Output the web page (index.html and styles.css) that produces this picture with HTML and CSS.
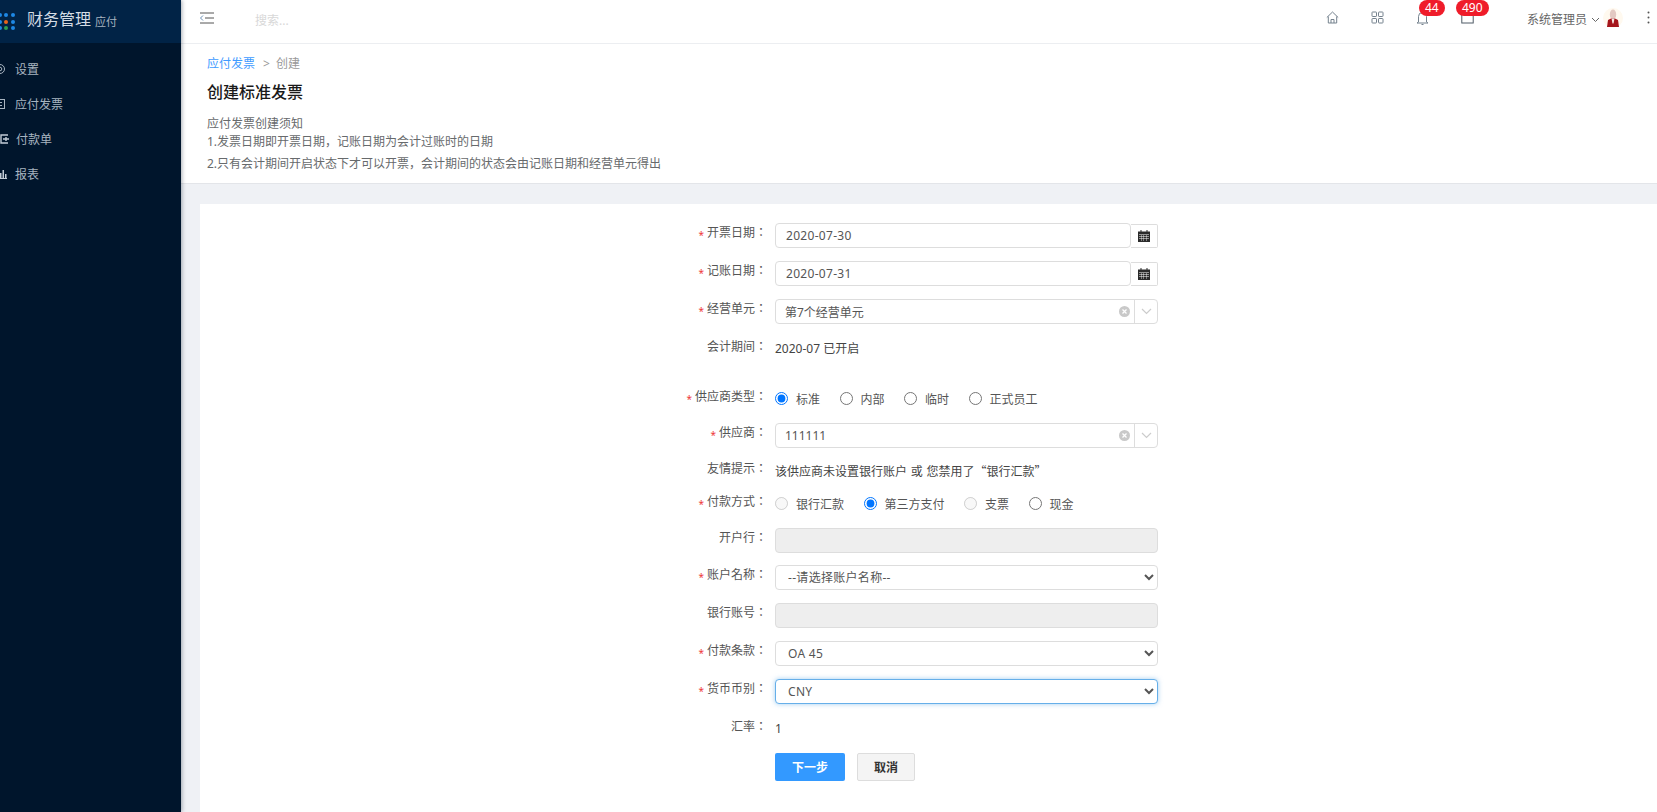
FILE: index.html
```html
<!DOCTYPE html>
<html lang="zh-CN">
<head>
    <meta charset="UTF-8">
    <meta name="viewport" content="width=device-width, initial-scale=1.0">
    <title>创建标准发票</title>
    <link rel="stylesheet" href="styles.css">
</head>
<body>
    <aside class="sidebar">
        <div class="brand">
            <svg class="brand-dots" width="18" height="20" viewBox="0 0 18 20">
                <g fill="#1e88e5">
                    <circle cx="0" cy="3" r="2"/><circle cx="6" cy="3" r="2"/><circle cx="13" cy="3" r="2"/>
                    <circle cx="0" cy="10" r="2"/><circle cx="13" cy="10" r="2"/>
                    <circle cx="0" cy="16" r="2"/><circle cx="13" cy="16" r="2"/>
                </g>
                <circle cx="6" cy="10" r="2" fill="#e8651a"/>
                <circle cx="6" cy="16" r="2" fill="#2e9e4f"/>
            </svg>
            <span class="brand-name">财务管理</span>
            <span class="brand-sub">应付</span>
        </div>
        <nav class="menu">
            <a class="menu-item">
                <svg class="menu-icon" width="12" height="12" viewBox="0 0 12 12" fill="none" stroke="#a8b4c0"><circle cx="6" cy="6" r="4.5"/><circle cx="6" cy="6" r="1.8"/></svg>
                <span>设置</span>
            </a>
            <a class="menu-item">
                <svg class="menu-icon" width="12" height="12" viewBox="0 0 12 12" fill="none" stroke="#a8b4c0"><rect x="1.5" y="1.5" width="9" height="9"/><path d="M4 4.5h4M4 7.5h4"/></svg>
                <span>应付发票</span>
            </a>
            <a class="menu-item menu-item-wide">
                <svg class="menu-icon" width="12" height="12" viewBox="0 0 12 12" fill="none" stroke="#c2ccd6" stroke-width="1.4"><path d="M10 2H3v8h7M5 6h6M8 4v4"/></svg>
                <span>付款单</span>
            </a>
            <a class="menu-item menu-item-bars">
                <svg class="menu-icon" width="12" height="12" viewBox="0 0 12 12" fill="#c2ccd6"><rect x="0" y="5" width="1.5" height="6"/><rect x="2.5" y="2" width="1.5" height="9"/><rect x="5" y="6" width="1.5" height="5"/><rect x="0" y="10" width="7" height="1"/></svg>
                <span>报表</span>
            </a>
        </nav>
    </aside>

    <div class="main">
        <header class="topbar">
            <svg class="toggle" width="16" height="12" viewBox="0 0 16 12" fill="none" stroke="#555">
                <path d="M1 1h14M6 6h9M1 11h14"/>
                <path d="M4 3.5 1.5 6 4 8.5" stroke="#6a8fb5"/>
            </svg>
            <span class="search">搜索...</span>
            <div class="top-icons">
                <span class="top-icon">
                    <svg width="13" height="13" viewBox="0 0 13 13" fill="none" stroke="#75828e"><path d="M.8 6.5 6.5 1l5.700 5.500M2.300 5.500V12h8.400V5.500M5 12V8.500h3V12"/></svg>
                </span>
                <span class="top-icon">
                    <svg width="13" height="13" viewBox="0 0 13 13" fill="none" stroke="#75828e"><rect x="1" y="1" width="4.500" height="4.500" rx=".6"/><rect x="7.500" y="1" width="4.500" height="4.500" rx=".6"/><rect x="1" y="7.500" width="4.500" height="4.500" rx=".6"/><rect x="7.500" y="7.500" width="4.500" height="4.500" rx=".6"/></svg>
                </span>
                <span class="top-icon">
                    <svg width="13" height="15" viewBox="0 0 13 15" fill="none" stroke="#75828e"><path d="M2.500 11V5.500a4 4 0 0 1 8 0V11l1.500 1H1zM5.500 13.500h2"/></svg>
                    <b class="badge">44</b>
                </span>
                <span class="top-icon">
                    <svg width="13" height="13" viewBox="0 0 13 13" fill="none" stroke="#4f5b66"><rect x=".8" y="1" width="11.400" height="11"/><path d="M4 3.500h5"/></svg>
                    <b class="badge">490</b>
                </span>
            </div>
            <span class="user-name">系统管理员</span>
            <svg class="user-caret" width="9" height="6" viewBox="0 0 9 6" fill="none" stroke="#666"><path d="M1 1l3.500 3.500L8 1"/></svg>
            <svg class="avatar" width="20" height="20" viewBox="0 0 20 20">
                <circle cx="10" cy="10" r="10" fill="#fff9ef"/>
                <ellipse cx="10" cy="6.500" rx="3.200" ry="5" fill="#e3c9c2"/>
                <path d="M4 19l1-7 3-1.500h4l3 1.500 1 7z" fill="#a5151b"/>
                <path d="M8.500 10.500h3l-1 5h-1z" fill="#f4e8e4"/>
            </svg>
            <svg class="more" width="3" height="13" viewBox="0 0 3 13" fill="#555"><circle cx="1.500" cy="1.500" r="1"/><circle cx="1.500" cy="6.500" r="1"/><circle cx="1.500" cy="11.500" r="1"/></svg>
        </header>

        <section class="page-head">
            <div class="crumbs"><a>应付发票</a><i>&gt;</i><span>创建</span></div>
            <h1>创建标准发票</h1>
            <p class="notice-title">应付发票创建须知</p>
            <p class="notice-one">1.发票日期即开票日期，记账日期为会计过账时的日期</p>
            <p class="notice-two">2.只有会计期间开启状态下才可以开票，会计期间的状态会由记账日期和经营单元得出</p>
        </section>

        <section class="card">
            <form class="invoice-form">
                <div class="form-row">
                    <label class="form-label required">开票日期：</label>
                    <div class="form-field date-group">
                        <input class="control" type="text" value="2020-07-30">
                        <span class="date-btn"><svg width="12" height="12" viewBox="0 0 12 12"><path fill="#2b2b2b" d="M0 1.500h12V12H0z"/><path fill="#fff" d="M1 4.500h10v.4H1zM1 6.500h10v.4H1zM1 8.500h10v.4H1zM3 4.500h.4V11H3zM5.500 4.500h.4V11h-.4zM8.200 4.500h.4V11h-.4z"/><path fill="#2b2b2b" d="M2.500 0h1v2h-1zM8.500 0h1v2h-1z"/></svg></span>
                    </div>
                </div>
                <div class="form-row">
                    <label class="form-label required">记账日期：</label>
                    <div class="form-field date-group">
                        <input class="control" type="text" value="2020-07-31">
                        <span class="date-btn"><svg width="12" height="12" viewBox="0 0 12 12"><path fill="#2b2b2b" d="M0 1.500h12V12H0z"/><path fill="#fff" d="M1 4.500h10v.4H1zM1 6.500h10v.4H1zM1 8.500h10v.4H1zM3 4.500h.4V11H3zM5.500 4.500h.4V11h-.4zM8.200 4.500h.4V11h-.4z"/><path fill="#2b2b2b" d="M2.500 0h1v2h-1zM8.500 0h1v2h-1z"/></svg></span>
                    </div>
                </div>
                <div class="form-row">
                    <label class="form-label required">经营单元：</label>
                    <div class="form-field combo">
                        <span class="combo-value">第7个经营单元</span>
                        <svg class="combo-clear" width="11" height="11" viewBox="0 0 11 11"><circle cx="5.500" cy="5.500" r="5.500" fill="#c9c9c9"/><path d="M3.500 3.500l4 4M7.500 3.500l-4 4" stroke="#fff" stroke-width="1.300"/></svg>
                        <span class="combo-arrow"><svg width="11" height="7" viewBox="0 0 11 7" fill="none" stroke="#ccc" stroke-width="1.200"><path d="M1 1l4.500 4.500L10 1"/></svg></span>
                    </div>
                </div>
                <div class="form-row row-period">
                    <label class="form-label">会计期间：</label>
                    <div class="form-field form-text">2020-07 已开启</div>
                </div>
                <div class="form-row row-radio">
                    <label class="form-label required">供应商类型：</label>
                    <div class="form-field radios">
                        <label class="radio"><input type="radio" name="vendor-type" checked>标准</label>
                        <label class="radio"><input type="radio" name="vendor-type">内部</label>
                        <label class="radio"><input type="radio" name="vendor-type">临时</label>
                        <label class="radio"><input type="radio" name="vendor-type">正式员工</label>
                    </div>
                </div>
                <div class="form-row row-vendor">
                    <label class="form-label required">供应商：</label>
                    <div class="form-field combo">
                        <span class="combo-value">111111</span>
                        <svg class="combo-clear" width="11" height="11" viewBox="0 0 11 11"><circle cx="5.500" cy="5.500" r="5.500" fill="#c9c9c9"/><path d="M3.500 3.500l4 4M7.500 3.500l-4 4" stroke="#fff" stroke-width="1.300"/></svg>
                        <span class="combo-arrow"><svg width="11" height="7" viewBox="0 0 11 7" fill="none" stroke="#ccc" stroke-width="1.200"><path d="M1 1l4.500 4.500L10 1"/></svg></span>
                    </div>
                </div>
                <div class="form-row row-tip">
                    <label class="form-label">友情提示：</label>
                    <div class="form-field form-text tip-text">该供应商未设置银行账户 或 您禁用了“银行汇款”</div>
                </div>
                <div class="form-row row-radio">
                    <label class="form-label required">付款方式：</label>
                    <div class="form-field radios">
                        <label class="radio"><input type="radio" name="pay-type" disabled>银行汇款</label>
                        <label class="radio"><input type="radio" name="pay-type" checked>第三方支付</label>
                        <label class="radio"><input type="radio" name="pay-type" disabled>支票</label>
                        <label class="radio"><input type="radio" name="pay-type">现金</label>
                    </div>
                </div>
                <div class="form-row row-short">
                    <label class="form-label">开户行：</label>
                    <div class="form-field"><input class="control" type="text" disabled></div>
                </div>
                <div class="form-row">
                    <label class="form-label required">账户名称：</label>
                    <div class="form-field"><select class="control select"><option>--请选择账户名称--</option></select></div>
                </div>
                <div class="form-row">
                    <label class="form-label">银行账号：</label>
                    <div class="form-field"><input class="control" type="text" disabled></div>
                </div>
                <div class="form-row">
                    <label class="form-label required">付款条款：</label>
                    <div class="form-field"><select class="control select"><option>OA 45</option></select></div>
                </div>
                <div class="form-row">
                    <label class="form-label required">货币币别：</label>
                    <div class="form-field"><select class="control select is-focus"><option>CNY</option></select></div>
                </div>
                <div class="form-row row-short">
                    <label class="form-label">汇率：</label>
                    <div class="form-field form-text">1</div>
                </div>
                <div class="form-row">
                    <span class="form-label"></span>
                    <div class="form-field actions">
                        <button type="button" class="btn btn-primary">下一步</button>
                        <button type="button" class="btn btn-default">取消</button>
                    </div>
                </div>
            </form>
        </section>
    </div>
</body>
</html>
```

FILE: styles.css
```css
* {
    box-sizing: border-box;
}

html, body {
    height: 100%;
}

body {
    margin: 0;
    display: flex;
    height: 812px;
    overflow: hidden;
    font-family: "Noto Sans", "Noto Sans CJK SC", sans-serif;
    font-size: 12px;
    color: #555;
    background-color: #eff1f5;
}

/* sidebar */
.sidebar {
    width: 181px;
    flex-shrink: 0;
    background-color: #00152c;
    overflow: hidden;
    box-shadow: 1px 0 4px rgba(0, 21, 41, 0.35);
    z-index: 2;
}

.brand {
    height: 43px;
    display: flex;
    align-items: center;
    padding-bottom: 5px;
    background-color: #012346;
    color: #d5dde5;
}

.brand-dots {
    flex-shrink: 0;
    width: 18px;
    margin: 5px 9px 0 0;
    overflow: visible;
}

.brand-name {
    font-size: 16px;
    line-height: 20px;
}

.brand-sub {
    margin: 3px 0 0 4px;
    font-size: 11px;
    color: #a8b4c0;
}

.menu {
    padding-top: 8px;
}

.menu-item {
    height: 35px;
    display: flex;
    align-items: center;
    color: #a8b4c0;
    font-size: 12px;
}

.menu-icon {
    flex-shrink: 0;
    margin: 0 9px 0 -6px;
}

.menu-item-wide .menu-icon {
    margin: 0 6px 0 -2px;
}

.menu-item-bars .menu-icon {
    margin: 0 3px 0 0;
}

/* top bar */
.main {
    flex: 1;
    min-width: 0;
    display: flex;
    flex-direction: column;
}

.topbar {
    height: 44px;
    flex-shrink: 0;
    display: flex;
    align-items: center;
    padding-left: 18px;
    background-color: #fff;
    border-bottom: 1px solid #eceef1;
}

.toggle {
    margin: -7px 40px 0 0;
}

.search {
    margin-top: -4px;
    color: #d8d8d8;
    font-size: 12px;
}

.top-icons {
    margin: -6px 0 0 auto;
    display: flex;
    gap: 32px;
}

.top-icon {
    position: relative;
    width: 13px;
    height: 15px;
    display: flex;
}

.badge {
    position: absolute;
    top: -11px;
    left: 3px;
    height: 16px;
    padding: 0 6px;
    border-radius: 8px;
    background-color: #ef1c2a;
    color: #fff;
    font-size: 12px;
    font-weight: 400;
    line-height: 16px;
}

.top-icon:last-child .badge {
    left: -5px;
}

.user-name {
    margin: -4px 0 0 53px;
    color: #666;
    line-height: 16px;
}

.user-caret {
    margin: -4px 0 0 4px;
}

.avatar {
    margin: -8px 0 0 3px;
}

.more {
    margin: -8px 7px 0 24px;
}

/* page head */
.page-head {
    height: 140px;
    flex-shrink: 0;
    padding: 11px 26px 0;
    background-color: #fff;
    border-bottom: 1px solid #e3e5e9;
}

.crumbs {
    line-height: 18px;
    color: #999;
}

.crumbs a {
    color: #3f9bff;
}

.crumbs i {
    margin: 0 6px 0 8px;
    font-style: normal;
}

h1 {
    margin: 9px 0 0;
    font-size: 16px;
    font-weight: 500;
    line-height: 20px;
    color: #1a1a1a;
}

.page-head p {
    margin: 0;
    line-height: 18px;
    color: #676a6c;
}

.notice-title {
    padding-top: 13px;
}

.notice-two {
    padding-top: 4px;
}

/* form card */
.card {
    flex: 1;
    margin: 20px 0 0 19px;
    padding-top: 19px;
    background-color: #fff;
}

.form-row {
    display: flex;
    margin-bottom: 13px;
}

.row-period {
    height: 24px;
    margin-bottom: 26px;
}

.row-radio {
    height: 24px;
    margin-bottom: 12px;
}

.row-vendor {
    margin-bottom: 11px;
}

.row-tip {
    height: 24px;
    margin-bottom: 9px;
}

.row-short {
    margin-bottom: 12px;
}

.form-label {
    width: 575px;
    flex-shrink: 0;
    padding-right: 8px;
    text-align: right;
    font-family: "Noto Sans", "Noto Sans CJK TC", sans-serif;
    font-feature-settings: "locl" 0;
    line-height: 20px;
}

.required::before {
    content: "*";
    margin-right: 3px;
    color: #ee3a3a;
    font-size: 10px;
    vertical-align: -2px;
}

.form-field {
    width: 383px;
    flex-shrink: 0;
}

.form-text {
    line-height: 24px;
    color: #444;
}

.tip-text {
    font-family: "Noto Sans CJK SC", sans-serif;
    word-spacing: 1px;
}

.control {
    display: block;
    width: 100%;
    height: 25px;
    padding: 0 10px;
    border: 1px solid #ddd;
    border-radius: 4px;
    background-color: #fff;
    font: inherit;
    letter-spacing: 0.3px;
    color: #555;
    outline: none;
}

.control:disabled {
    background-color: #eee;
}

.select {
    padding: 0 8px;
}

.is-focus {
    border-color: #66afe9;
    box-shadow: 0 0 5px rgba(102, 175, 233, 0.6);
}

.date-group {
    display: flex;
}

.date-btn {
    width: 27px;
    height: 24px;
    flex-shrink: 0;
    display: flex;
    align-items: center;
    justify-content: center;
    margin-top: 1px;
    border: 1px solid #ddd;
    border-left: 0;
    border-radius: 0 2px 2px 0;
}

.combo {
    height: 25px;
    display: flex;
    align-items: center;
    border: 1px solid #ddd;
    border-radius: 4px;
}

.combo-value {
    flex: 1;
    padding-left: 9px;
}

.combo-clear {
    margin-right: 4px;
}

.combo-arrow {
    width: 23px;
    height: 100%;
    display: flex;
    align-items: center;
    justify-content: center;
    border-left: 1px solid #ddd;
}

.radios {
    display: flex;
    gap: 19.500px;
    height: 23px;
    align-items: center;
}

.radio {
    display: flex;
    align-items: center;
}

.radio input {
    width: 13px;
    height: 13px;
    margin: 0 8px 0 0;
}

.actions {
    display: flex;
    gap: 12px;
}

.btn {
    height: 28px;
    border-radius: 2px;
    font: inherit;
    font-weight: 700;
    cursor: pointer;
}

.btn-primary {
    width: 70px;
    border: none;
    background-color: #3399ff;
    color: #fff;
}

.btn-default {
    width: 58px;
    border: 1px solid #ddd;
    background-color: #f4f4f4;
    color: #333;
}
```
